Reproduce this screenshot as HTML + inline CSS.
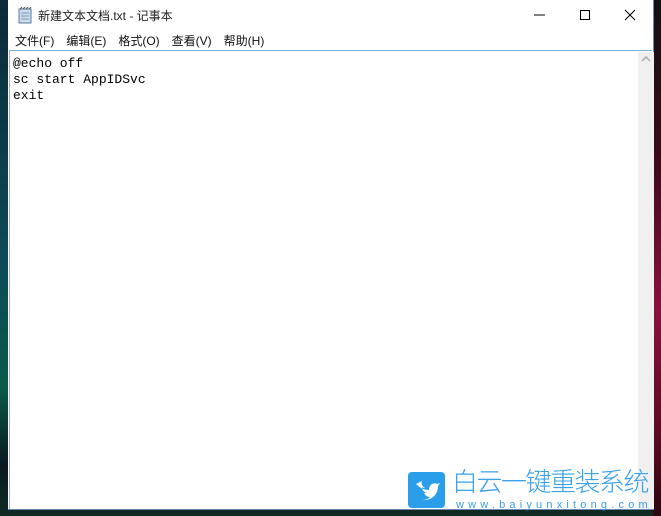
<!DOCTYPE html>
<html><head><meta charset="utf-8"><style>
body{margin:0;width:661px;height:516px;overflow:hidden;position:relative;background:linear-gradient(180deg,#0c2a38 0%,#0d4a58 50%,#0b5a4a 75%,#0a1a20 90%,#102a22 100%);font-family:"Liberation Sans","Noto Sans CJK SC",sans-serif}
.rbg{position:absolute;left:653px;top:0;width:8px;height:516px;background:linear-gradient(180deg,#111 0%,#3a0a1a 30%,#8a1040 60%,#5a0a20 85%,#2a0810 100%)}
.win{position:absolute;left:8px;top:0;width:645px;height:509px;background:#fff;border-right:1px solid #6a8ab0;border-bottom:1px solid #6a8ab0}
.title{position:absolute;left:30px;top:7px;font-size:12px;color:#222}
.menu{position:absolute;left:7px;top:32px;font-size:12px;color:#111;word-spacing:0}
.menu span{margin-right:12px}
.edit{position:absolute;left:1px;top:50px;width:642px;height:458px;border-top:1px solid #7ab0d8;border-left:1px solid #aac;}
pre{margin:0;position:absolute;left:3px;top:5px;font-family:"Liberation Mono",monospace;font-size:13px;line-height:16px;color:#000}
.sb{position:absolute;left:628px;top:1px;width:16px;height:457px;background:#f0f0f0}
.logo{position:absolute;left:408px;top:472px;width:37px;height:36px;background:#2a9ee8;border-radius:4px}
.lt{position:absolute;left:452px;top:463px;font-size:26px;line-height:36px;color:#3aa0e8;letter-spacing:-1.5px;white-space:nowrap;font-family:"Noto Sans CJK SC",sans-serif;font-weight:300}
.url{position:absolute;left:456px;top:500px;font-size:11px;color:#3aa0e8;letter-spacing:4.2px;line-height:11px;white-space:nowrap}
</style></head><body>
<div class="rbg"></div>
<div class="win">
<svg style="position:absolute;left:10px;top:7px" width="15" height="17"><rect x="1" y="2" width="12" height="14" fill="#cde" stroke="#5a7a9a"/><path d="M3 6h8M3 9h8M3 12h8" stroke="#7899b8"/><path d="M2 2 l2-2 M5 2 l2-2 M8 2 l2-2 M11 2 l2-2" stroke="#555"/></svg>
<div class="title">新建文本文档.txt - 记事本</div>
<svg style="position:absolute;left:522px;top:7px" width="120" height="16"><path d="M4 8h11" stroke="#000"/><rect x="50.5" y="3.5" width="9" height="9" fill="none" stroke="#000"/><path d="M95 3l10 10M105 3l-10 10" stroke="#000"/></svg>
<div class="menu"><span>文件(F)</span><span>编辑(E)</span><span>格式(O)</span><span>查看(V)</span><span>帮助(H)</span></div>
<div class="edit"><pre>@echo off
sc start AppIDSvc
exit</pre>
<div class="sb"><svg width="16" height="14"><path d="M4 9l4-4 4 4" stroke="#aaa" fill="none" stroke-width="1.5"/></svg></div>
</div>
</div>
<div class="logo"><svg width="37" height="36"><path d="M8 12c4 4 8 6 13 6 0-5 4-8 8-6l3-1-2 3c0 9-7 15-16 14 3 0 6-1 8-3-3 0-5-2-6-4h3c-3-1-5-3-5-6 1 1 2 1 3 1-3-2-4-4-3-7z" fill="#fff"/></svg></div>
<div class="lt">白云一键重装系统</div>
<div class="url">www.baiyunxitong.com</div>
</body></html>
